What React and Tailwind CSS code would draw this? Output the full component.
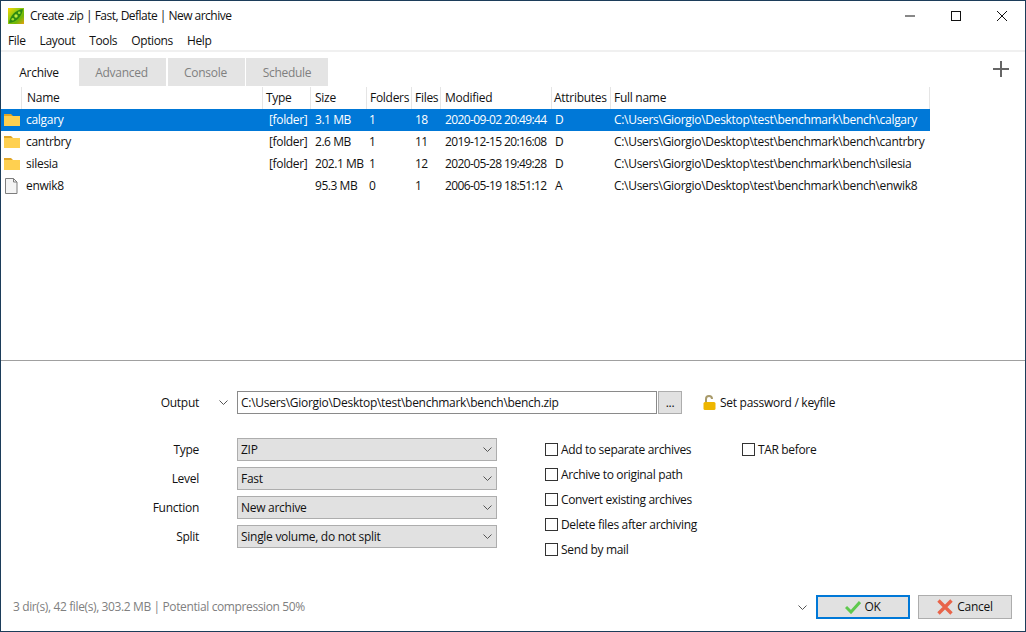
const columns = [
  { label: "Name", width: "w-[241px]", pad: "pl-[5px]" },
  { label: "Type", width: "w-[48px]", pad: "pl-[3px]" },
  { label: "Size", width: "w-[56px]", pad: "pl-[4px]" },
  { label: "Folders", width: "w-[45px]", pad: "pl-[3px]" },
  { label: "Files", width: "w-[29px]", pad: "pl-[3px]" },
  { label: "Modified", width: "w-[111px]", pad: "pl-[4px]" },
  { label: "Attributes", width: "w-[59px]", pad: "pl-[2px]" },
  { label: "Full name", width: "w-[319px]", pad: "pl-[3px]" },
];

const files = [
  { name: "calgary", type: "[folder]", size: "3.1 MB", folders: "1", count: "18", modified: "2020-09-02 20:49:44", attr: "D", path: "C:\\Users\\Giorgio\\Desktop\\test\\benchmark\\bench\\calgary", selected: true },
  { name: "cantrbry", type: "[folder]", size: "2.6 MB", folders: "1", count: "11", modified: "2019-12-15 20:16:08", attr: "D", path: "C:\\Users\\Giorgio\\Desktop\\test\\benchmark\\bench\\cantrbry" },
  { name: "silesia", type: "[folder]", size: "202.1 MB", folders: "1", count: "12", modified: "2020-05-28 19:49:28", attr: "D", path: "C:\\Users\\Giorgio\\Desktop\\test\\benchmark\\bench\\silesia" },
  { name: "enwik8", type: "", size: "95.3 MB", folders: "0", count: "1", modified: "2006-05-19 18:51:12", attr: "A", path: "C:\\Users\\Giorgio\\Desktop\\test\\benchmark\\bench\\enwik8" },
];

const selects = [
  { label: "Type", value: "ZIP" },
  { label: "Level", value: "Fast" },
  { label: "Function", value: "New archive" },
  { label: "Split", value: "Single volume, do not split" },
];

const options = [
  "Add to separate archives",
  "Archive to original path",
  "Convert existing archives",
  "Delete files after archiving",
  "Send by mail",
];

function PeaLogo() {
  return (
    <svg width="16" height="16" viewBox="0 0 16 16">
      <defs>
        <linearGradient id="pea" x1="0" y1="0" x2="1" y2="1">
          <stop offset="0" stopColor="#ffd400" />
          <stop offset="0.35" stopColor="#9ccc10" />
          <stop offset="0.7" stopColor="#6fb808" />
          <stop offset="1" stopColor="#e8a010" />
        </linearGradient>
      </defs>
      <rect width="16" height="16" fill="url(#pea)" />
      <path d="M1 15C2 8 7 2 15 1 14 8 9 14 1 15z" fill="#2e8a12" />
      <circle cx="4.8" cy="11.2" r="1.3" fill="#a6e02c" />
      <circle cx="8" cy="8" r="1.7" fill="#c2ec3a" />
      <circle cx="11.2" cy="4.8" r="1.3" fill="#a6e02c" />
    </svg>
  );
}

function FolderIcon() {
  return (
    <svg width="16" height="14" viewBox="0 0 16 14">
      <path d="M0 1h7l2 2H0z" fill="#e0a526" />
      <rect x="0" y="3" width="16" height="10" fill="#ffd050" />
    </svg>
  );
}

function FileIcon() {
  return (
    <svg width="14" height="16" viewBox="0 0 14 16">
      <path d="M1.5.5h8l3.5 3.5v11.5H1.5z" fill="#f4f4f4" stroke="#7d7d7d" />
      <path d="M9.5.5V4H13" fill="none" stroke="#7d7d7d" />
    </svg>
  );
}

function LockIcon() {
  return (
    <svg width="13" height="15" viewBox="0 0 13 15">
      <path d="M3 7V4a3 3 0 0 1 6 0" fill="none" stroke="#a89a6a" strokeWidth="2" />
      <rect x="0.5" y="7" width="12" height="8" rx="1.5" fill="#eeb600" />
    </svg>
  );
}

function Chevron({ className }) {
  return (
    <svg width="9" height="5" viewBox="0 0 9 5" className={className}>
      <path d="M.5.5l4 4 4-4" fill="none" stroke="#555" />
    </svg>
  );
}

function Row({ file }) {
  return (
    <div className={"flex h-[22px] items-center w-[929px] " + (file.selected ? "bg-[#0078d7] text-white" : "")}>
      <div className="w-[21px] pl-[3px] flex items-center shrink-0">
        {file.type ? <FolderIcon /> : <FileIcon />}
      </div>
      <div className="w-[241px] pl-[4px]">{file.name}</div>
      <div className="w-[48px] pl-[6px] tracking-[-0.35px] whitespace-nowrap">{file.type}</div>
      <div className="w-[56px] pl-[4px] tracking-[-0.45px] whitespace-nowrap">{file.size}</div>
      <div className="w-[45px] pl-[2px]">{file.folders}</div>
      <div className="w-[29px] pl-[3px] tracking-[-0.5px]">{file.count}</div>
      <div className="w-[111px] pl-[4px] whitespace-nowrap tracking-[-0.62px]">{file.modified}</div>
      <div className="w-[59px] pl-[3px]">{file.attr}</div>
      <div className="w-[319px] pl-[3px] whitespace-nowrap tracking-[-0.3px]">{file.path}</div>
    </div>
  );
}

function Checkbox({ label }) {
  return (
    <label className="flex items-center h-[25px] whitespace-nowrap tracking-[-0.34px]">
      <span className="w-[13px] h-[13px] border border-[#333] bg-white mr-[3px] shrink-0" />
      {label}
    </label>
  );
}

export default function App() {
  return (
    <div className="w-[1026px] h-[632px] flex flex-col bg-white border border-[#1c3d5a] text-[12px] text-[#111] font-['Open_Sans','Noto_Sans',sans-serif] overflow-hidden tracking-[-0.28px]">
      <div className="flex items-center h-[29px] shrink-0">
        <div className="ml-[7px] mr-[6px] flex"><PeaLogo /></div>
        <span className="tracking-[-0.52px]">Create .zip | Fast, Deflate | New archive</span>
        <div className="ml-auto flex items-center">
          <svg width="46" height="14" viewBox="0 0 46 14"><path d="M18 7h10" stroke="#111" /></svg>
          <svg width="46" height="14" viewBox="0 0 46 14"><rect x="18.5" y="2.5" width="9" height="9" fill="none" stroke="#111" /></svg>
          <svg width="46" height="14" viewBox="0 0 46 14"><path d="M18 2l10 10M28 2l-10 10" stroke="#111" /></svg>
        </div>
      </div>

      <div className="flex items-center h-[20px] pl-[7px] pt-[2px] gap-[14px] shrink-0 tracking-[-0.36px]">
        {["File", "Layout", "Tools", "Options", "Help"].map((m) => <span key={m}>{m}</span>)}
      </div>
      <div className="h-[2px] bg-[#f0f0f0] shrink-0" />

      <div className="flex items-start h-[35px] pt-[6px] pl-[1px] shrink-0 relative">
        <div className="w-[76px] h-[28px] pt-[1px] flex items-center justify-center -ml-[1px]">Archive</div>
        <div className="w-[87px] h-[28px] pt-[1px] pr-[2px] ml-[2px] flex items-center justify-center bg-[#e4e4e4] text-[#808080]">Advanced</div>
        <div className="w-[77px] h-[28px] pt-[1px] pr-[2px] ml-[2px] flex items-center justify-center bg-[#e4e4e4] text-[#808080]">Console</div>
        <div className="w-[82px] h-[28px] pt-[1px] ml-[1px] flex items-center justify-center bg-[#e4e4e4] text-[#808080]">Schedule</div>
        <svg width="16" height="16" viewBox="0 0 16 16" className="absolute left-[992px] top-[9px]">
          <path d="M8 0v16M0 8h16" stroke="#666" strokeWidth="2" />
        </svg>
      </div>

      <div className="flex-1 min-h-0">
        <div className="flex h-[22px] items-center w-[929px]">
          <div className="w-[21px] h-full border-r border-[#e5e5e5] shrink-0" />
          {columns.map((c) => (
            <div key={c.label} className={c.width + " " + c.pad + " h-full flex items-center border-r border-[#e5e5e5] shrink-0 whitespace-nowrap"}>
              {c.label}
            </div>
          ))}
        </div>
        {files.map((f) => <Row key={f.name} file={f} />)}
      </div>

      <div className="h-[1px] bg-[#a0a0a0] shrink-0" />

      <div className="h-[270px] shrink-0 flex flex-col">
        <div className="flex items-center h-[23px] mt-[30px] shrink-0">
          <span className="w-[198px] text-right">Output</span>
          <Chevron className="ml-[20px] mr-[9px]" />
          <div className="w-[420px] h-[23px] flex items-center border border-[#8a8a8a] pl-[3px] tracking-[-0.28px] whitespace-nowrap">C:\Users\Giorgio\Desktop\test\benchmark\bench\bench.zip</div>
          <div className="w-[24px] h-[23px] ml-[1px] flex items-center justify-center border border-[#adadad] bg-[#e1e1e1]">...</div>
          <div className="ml-[21px] mr-[4px] flex"><LockIcon /></div>
          <span>Set password / keyfile</span>
        </div>

        <div className="flex mt-[24px]">
          <div className="flex flex-col gap-[6px]">
            {selects.map((s) => (
              <div key={s.label} className="flex items-center h-[23px]">
                <span className="w-[198px] text-right mr-[38px]">{s.label}</span>
                <div className="w-[260px] h-[23px] flex items-center justify-between border border-[#adadad] bg-[#e1e1e1] pl-[3px] pr-[4px]">
                  {s.value}
                  <Chevron />
                </div>
              </div>
            ))}
          </div>
          <div className="ml-[48px] -mt-[1px] w-[197px]">
            {options.map((o) => <Checkbox key={o} label={o} />)}
          </div>
          <div className="-mt-[1px]">
            <Checkbox label="TAR before" />
          </div>
        </div>

        <div className="flex items-center h-[24px] mt-auto mb-[12px] pl-[12px]">
          <span className="text-[#808080] tracking-[-0.38px]">3 dir(s), 42 file(s), 303.2 MB | Potential compression 50%</span>
          <Chevron className="ml-auto mr-[9px]" />
          <div className="w-[94px] h-[24px] flex items-center justify-center gap-[3px] border-2 border-[#0078d7] bg-[#e1e1e1]">
            <svg width="16" height="14" viewBox="0 0 16 14"><path d="M1 7l5 5 9-10" fill="none" stroke="#5fc94e" strokeWidth="3" /></svg>
            OK
          </div>
          <div className="w-[94px] h-[24px] ml-[8px] mr-[13px] flex items-center justify-center gap-[4px] border border-[#adadad] bg-[#e1e1e1]">
            <svg width="16" height="16" viewBox="0 0 16 16"><path d="M1.5 1.5l13 13M14.5 1.5l-13 13" stroke="#e8644a" strokeWidth="3.4" /></svg>
            Cancel
          </div>
        </div>
      </div>
    </div>
  );
}
